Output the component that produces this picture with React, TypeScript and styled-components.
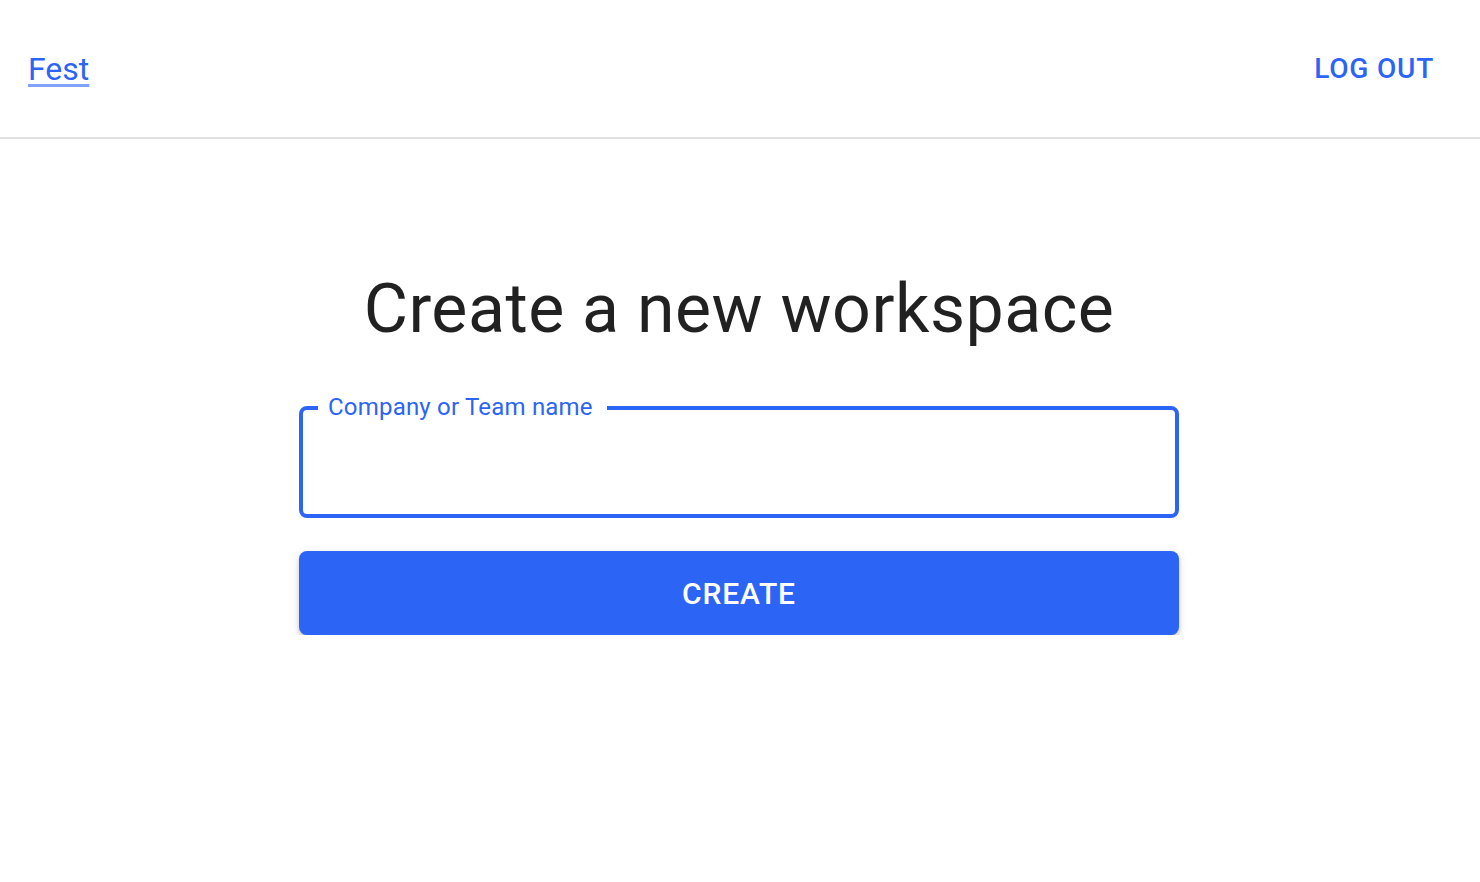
import * as React from 'react'
import styled, { createGlobalStyle } from 'styled-components'

const GlobalStyle = createGlobalStyle`
  html, body {
    margin: 0;
    padding: 0;
    background: #ffffff;
    font-family: Roboto, "Liberation Sans", sans-serif;
  }
`

const blue = '#2c64f6'

const Header = styled.header`
  height: 137px;
  border-bottom: 2px solid #e0e0e0;
  display: flex;
  align-items: center;
  justify-content: space-between;
  padding: 0 30px 0 28px;
`

const BrandLink = styled.a`
  font-size: 32px;
  line-height: 1.5;
  color: ${blue};
  text-decoration: underline;
  text-decoration-color: rgba(44, 100, 246, 0.6);
  text-decoration-thickness: 3px;
  text-underline-offset: 4px;
  cursor: pointer;
`

const TextButton = styled.button`
  border: 0;
  background: transparent;
  color: ${blue};
  font-family: Roboto, "Liberation Sans", sans-serif;
  font-size: 28px;
  font-weight: 500;
  letter-spacing: 0.8px;
  line-height: 1.75;
  padding: 12px 16px;
  text-transform: uppercase;
  cursor: pointer;
`

const Main = styled.main`
  width: 880px;
  margin: 0 auto;
  padding-top: 128px;
  display: flex;
  flex-direction: column;
  position: relative;
  left: -1px;
`

const Title = styled.h1`
  margin: 0 0 55px;
  font-size: 68px;
  font-weight: 400;
  line-height: 84px;
  letter-spacing: 0.5px;
  color: rgba(0, 0, 0, 0.87);
  text-align: center;
`

const Field = styled.div`
  position: relative;
  height: 112px;
  box-sizing: border-box;
  border: 4px solid ${blue};
  border-radius: 8px;
`

const FieldLabel = styled.label`
  position: absolute;
  left: 15px;
  top: -15px;
  padding: 0 14px 0 10px;
  background: #ffffff;
  color: ${blue};
  font-size: 24px;
  line-height: 24px;
  letter-spacing: 0.2px;
`

const FieldInput = styled.input`
  width: 100%;
  height: 100%;
  box-sizing: border-box;
  border: 0;
  outline: none;
  background: transparent;
  padding: 0 24px;
  font-family: Roboto, "Liberation Sans", sans-serif;
  font-size: 32px;
  color: rgba(0, 0, 0, 0.87);
`

const PrimaryButton = styled.button`
  margin-top: 33px;
  height: 84px;
  border: 0;
  border-radius: 8px;
  background: ${blue};
  color: #ffffff;
  font-family: Roboto, "Liberation Sans", sans-serif;
  font-size: 30px;
  font-weight: 500;
  letter-spacing: 0.85px;
  text-transform: uppercase;
  box-shadow: 0 6px 2px -4px rgba(0, 0, 0, 0.2), 0 4px 4px 0 rgba(0, 0, 0, 0.14),
    0 2px 10px 0 rgba(0, 0, 0, 0.12);
  cursor: pointer;
`

export default function App() {
  const [name, setName] = React.useState('')
  return (
    <>
      <GlobalStyle />
      <Header>
        <BrandLink>Fest</BrandLink>
        <TextButton type="button">Log out</TextButton>
      </Header>
      <Main>
        <Title>Create a new workspace</Title>
        <Field>
          <FieldLabel htmlFor="team-name">Company or Team name</FieldLabel>
          <FieldInput
            id="team-name"
            value={ name }
            onChange={ (e) => setName(e.target.value) }
          />
        </Field>
        <PrimaryButton type="button">Create</PrimaryButton>
      </Main>
    </>
  )
}
